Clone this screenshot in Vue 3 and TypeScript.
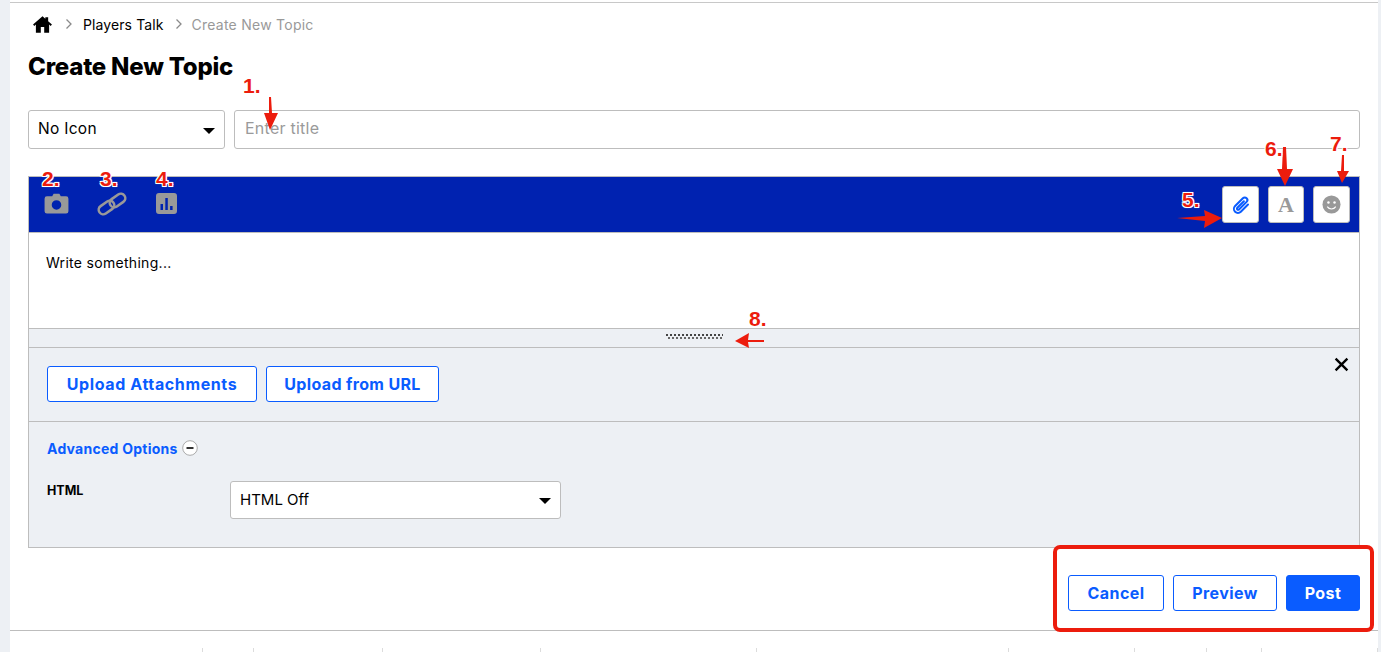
<script setup lang="ts">
const notes = [
  { n: '1.', x: 243, y: 75 },
  { n: '2.', x: 42, y: 168 },
  { n: '3.', x: 100, y: 168 },
  { n: '4.', x: 156, y: 168 },
  { n: '5.', x: 1182, y: 189 },
  { n: '6.', x: 1265, y: 138 },
  { n: '7.', x: 1330, y: 133 },
  { n: '8.', x: 749, y: 308 },
]
const arrows = [
  '269,97 271,97 272,113 278,113 270,130 264,113 269,113',
  '1177,218 1205,216 1204,210 1222,218 1204,228 1205,221',
  '1283,147 1286,147 1287,169 1293,169 1285,186 1277,169 1282,169',
  '1342,155 1344,155 1344,171 1349,171 1342,183 1337,171 1341,171',
  '764,340 764,342 748,342 749,348 735,341 749,333 748,340',
]
const cells = [176, 51, 129, 158, 216, 252, 126, 72, 55, 116]
</script>

<template>
  <div class="page">
    <main class="content">
      <div class="top-rule"></div>
      <nav class="crumbs">
        <svg class="home" viewBox="0 0 20 18" width="19" height="17" aria-hidden="true">
          <path d="M10 .3 0 9l1.300 1.500L3 9.100v8.600h5.200v-6h3.600v6H17V9.100l1.700 1.400L20 9l-4-3.500V1.300h-3v1.600z" fill="#000" />
        </svg>
        <svg class="chev" viewBox="0 0 8 12" width="8" height="12" aria-hidden="true"><path d="M1.500 1.500 6 6l-4.500 4.500" fill="none" stroke="#8a8a8a" stroke-width="1.300" /></svg>
        <span class="crumb-link">Players Talk</span>
        <svg class="chev chev2" viewBox="0 0 8 12" width="8" height="12" aria-hidden="true"><path d="M1.500 1.500 6 6l-4.500 4.500" fill="none" stroke="#8a8a8a" stroke-width="1.300" /></svg>
        <span class="crumb-now">Create New Topic</span>
      </nav>

      <h1 class="title">Create New Topic</h1>

      <div class="topline">
        <div class="select icon-select">
          <span>No Icon</span>
          <i class="caret"></i>
        </div>
        <input class="title-input" type="text" placeholder="Enter title" />
      </div>

      <section class="editor">
        <div class="toolbar">
          <div class="tools">
            <svg viewBox="0 0 26 22" width="25" height="21" aria-hidden="true">
              <path fill-rule="evenodd" fill="#999" d="M3 3.500h5.500L10 .8h6l1.500 2.700H23a2.500 2.500 0 0 1 2.500 2.500v13A2.500 2.500 0 0 1 23 21.500H3A2.500 2.500 0 0 1 .5 19V6A2.500 2.500 0 0 1 3 3.500zM13 7.500a5 5 0 1 0 0 10 5 5 0 0 0 0-10z" />
            </svg>
            <svg class="link-ic" viewBox="0 0 30 24" width="30" height="24" aria-hidden="true">
              <g fill="none" stroke="#999" stroke-width="2.600">
                <rect x="1" y="11" width="17" height="9" rx="4.500" transform="rotate(-35 9.500 15.500)" />
                <rect x="12" y="4" width="17" height="9" rx="4.500" transform="rotate(-35 20.500 8.500)" />
              </g>
            </svg>
            <svg class="chart-ic" viewBox="0 0 21 21" width="21" height="21" aria-hidden="true">
              <path fill-rule="evenodd" fill="#999" d="M3 0h15a3 3 0 0 1 3 3v15a3 3 0 0 1-3 3H3a3 3 0 0 1-3-3V3a3 3 0 0 1 3-3zM4.500 11v6h2.500v-6zM9.300 5v12h2.500V5zM14.100 13v4h2.500v-4z" />
            </svg>
          </div>
          <div class="tool-btns">
            <button class="tbtn" type="button" aria-label="Attach">
              <svg viewBox="0 0 20 20" width="20" height="20" aria-hidden="true">
                <path d="M17 9.500 9.800 16.700a4 4 0 0 1-5.700-5.700l7.800-7.800a2.600 2.600 0 0 1 3.700 3.700l-7.600 7.600a1.200 1.200 0 0 1-1.700-1.700l6.600-6.600" fill="none" stroke="#0a5cff" stroke-width="2" stroke-linecap="round" />
              </svg>
            </button>
            <button class="tbtn tbtn-a" type="button">A</button>
            <button class="tbtn" type="button" aria-label="Emoji">
              <svg viewBox="0 0 20 20" width="19" height="19" aria-hidden="true">
                <circle cx="10" cy="10" r="9.500" fill="#999" />
                <circle cx="6.800" cy="7.800" r="1.300" fill="#fff" />
                <circle cx="13.200" cy="7.800" r="1.300" fill="#fff" />
                <path d="M5.500 12.300c1.200 1.700 2.800 2.400 4.500 2.400s3.300-.7 4.500-2.400" fill="none" stroke="#fff" stroke-width="1.200" />
              </svg>
            </button>
          </div>
        </div>

        <div class="body-area">Write something...</div>
        <div class="resizer">
          <svg class="grip" width="57" height="6" viewBox="0 0 57 6" aria-hidden="true">
            <defs>
              <pattern id="grip-dots" width="4" height="6" patternUnits="userSpaceOnUse">
                <rect width="2" height="2" fill="#444" />
                <rect x="2" y="3" width="2" height="2" fill="#666" />
              </pattern>
            </defs>
            <rect width="57" height="6" fill="url(#grip-dots)" />
          </svg>
        </div>

        <div class="attach">
          <button class="btn btn-att" type="button">Upload Attachments</button>
          <button class="btn btn-url" type="button">Upload from URL</button>
          <svg class="close" viewBox="0 0 14 14" width="15" height="15" aria-hidden="true">
            <path d="M1.500 1.500l11 11M12.500 1.500l-11 11" stroke="#000" stroke-width="2.200" fill="none" />
          </svg>
        </div>

        <div class="options">
          <div class="adv">
            <span>Advanced Options</span>
            <svg viewBox="0 0 16 16" width="16" height="16" aria-hidden="true">
              <circle cx="8" cy="8" r="7.300" fill="#fff" stroke="#aaa" />
              <path d="M4.500 8h7" stroke="#333" stroke-width="2" />
            </svg>
          </div>
          <div class="opt-row">
            <label class="opt-label">HTML</label>
            <div class="select html-select">
              <span>HTML Off</span>
              <i class="caret"></i>
            </div>
          </div>
        </div>
      </section>

      <div class="actions">
        <button class="btn act" type="button">Cancel</button>
        <button class="btn act" type="button">Preview</button>
        <button class="btn act primary" type="button">Post</button>
      </div>

      <div class="foot-line"></div>
      <div class="foot-cells">
        <span v-for="w in cells" :key="w" class="cell" :style="{ width: w + 'px' }"></span>
      </div>
    </main>

    <svg class="arrows" viewBox="0 0 1381 652" width="1381" height="652" aria-hidden="true">
      <polygon v-for="p in arrows" :key="p" :points="p" fill="#ec1c0d" />
    </svg>
    <span v-for="t in notes" :key="t.n" class="note" :style="{ left: t.x + 'px', top: t.y + 'px' }">{{ t.n }}</span>
    <div class="red-box"></div>
  </div>
</template>

<style>
html, body { margin: 0; background: #fff; overflow: hidden; }
</style>

<style scoped>
.page {
  position: relative;
  width: 1381px;
  height: 652px;
  overflow: hidden;
  background: #edf0f4;
  padding: 0 3px 0 10px;
  box-sizing: border-box;
  font-family: Inter, "Open Sans", sans-serif;
  color: #000;
}
.content {
  height: 652px;
  box-sizing: border-box;
  background: #fff;
  position: relative;
  display: flex;
  flex-direction: column;
  padding: 0 18px;
}
.content > * { flex: none; }
.top-rule {
  height: 1px;
  margin: 2px -18px 0;
  background: #c8c8c8;
}
.crumbs {
  display: flex;
  align-items: center;
  height: 18px;
  margin-top: 12px;
  padding-left: 5px;
  font-size: 14px;
  letter-spacing: .1px;
}
.home { flex: none; }
.chev { margin: 0 10px 0 13px; flex: none; }
.chev2 { margin: 0 8px 0 11px; }
.crumb-link { color: #000; }
.crumb-now { color: #999; letter-spacing: .25px; margin-left: 1px; }
.title {
  margin: 18px 0 0;
  font-size: 24px;
  line-height: 32px;
  font-weight: 800;
  letter-spacing: -.22px;
}
.topline {
  display: flex;
  gap: 9px;
  margin-top: 27px;
}
.select {
  display: flex;
  align-items: center;
  justify-content: space-between;
  background: #fff;
  border: 1px solid #bdbdbd;
  border-radius: 3px;
  box-sizing: border-box;
  font-size: 15.500px;
  padding: 0 9px;
}
.icon-select { width: 197px; height: 39px; letter-spacing: .3px; padding-bottom: 2px; }
.icon-select .caret { margin-top: 5px; }
.title-input {
  flex: 1;
  min-width: 0;
  height: 39px;
  box-sizing: border-box;
  border: 1px solid #bdbdbd;
  border-radius: 3px;
  padding: 0 9px 3px 10px;
  font: inherit;
  font-size: 16px;
  letter-spacing: .25px;
  outline: none;
}
.title-input::placeholder { color: #9a9a9a; opacity: 1; }
.caret {
  width: 0;
  height: 0;
  border-left: 6px solid transparent;
  border-right: 6px solid transparent;
  border-top: 6px solid #000;
  margin-top: 3px;
}
.editor {
  margin-top: 27px;
  border: 1px solid #bdbdbd;
  border-top: 0;
  height: 372px;
  box-sizing: border-box;
  display: flex;
  flex-direction: column;
}
.toolbar {
  height: 57px;
  flex: none;
  box-sizing: border-box;
  background: #0022b0;
  border-top: 1px solid #bdbdbd;
  border-bottom: 1px solid #bdbdbd;
  display: flex;
  align-items: center;
  justify-content: space-between;
  padding: 0 9px 0 15px;
}
.tools { display: flex; align-items: center; margin-bottom: 2px; }
.link-ic { margin-left: 28px; }
.chart-ic { margin-left: 29px; }
.tool-btns { display: flex; gap: 9px; }
.tbtn {
  width: 37px;
  height: 37px;
  padding: 0;
  background: #fff;
  border: 1px solid #bdbdbd;
  border-radius: 3px;
  display: flex;
  align-items: center;
  justify-content: center;
}
.tbtn-a {
  width: 36px;
  font-family: "Liberation Serif", serif;
  font-weight: 700;
  font-size: 22px;
  color: #999;
}
.body-area {
  height: 95px;
  flex: none;
  box-sizing: border-box;
  padding: 21px 0 0 17px;
  font-size: 14px;
  letter-spacing: .3px;
  line-height: 18px;
}
.resizer {
  height: 20px;
  flex: none;
  box-sizing: border-box;
  background: #edf0f4;
  border-top: 1px solid #bdbdbd;
  border-bottom: 1px solid #bdbdbd;
  display: flex;
  justify-content: center;
  padding-top: 5px;
}
.grip { flex: none; }
.attach {
  height: 74px;
  flex: none;
  box-sizing: border-box;
  border-bottom: 1px solid #bdbdbd;
  padding: 18px 0 0 18px;
  background: #edf0f4;
  display: flex;
  align-items: flex-start;
  gap: 9px;
  position: relative;
}
.btn {
  height: 36px;
  box-sizing: border-box;
  background: #fff;
  border: 1px solid #0a5cff;
  border-radius: 3px;
  color: #0a5cff;
  font-family: inherit;
  font-weight: 700;
  font-size: 16px;
  letter-spacing: .45px;
  padding: 0 0 1px;
  width: 210px;
}
.btn-att { letter-spacing: .62px; }
.btn-url { width: 173px; letter-spacing: .35px; }
.close { position: absolute; right: 10px; top: 9px; }
.options {
  flex: 1;
  background: #edf0f4;
  padding: 17px 0 0 18px;
}
.adv {
  display: flex;
  align-items: center;
  gap: 4px;
  color: #0a5cff;
  font-weight: 700;
  font-size: 14px;
  letter-spacing: .25px;
  height: 18px;
}
.opt-row { display: flex; align-items: flex-start; margin-top: 24px; }
.opt-label {
  width: 183px;
  font-weight: 700;
  font-size: 12.500px;
  line-height: 18px;
  margin-top: 1px;
}
.html-select { width: 331px; height: 38px; font-size: 15px; padding-bottom: 1px; }
.actions {
  display: flex;
  justify-content: flex-end;
  gap: 9px;
  margin-top: 27px;
}
.act { width: 96px; }
.act:nth-child(2) { width: 104px; }
.primary { width: 74px; background: #0a5cff; color: #fff; }
.foot-line {
  margin: 19px -18px 0;
  height: 1px;
  background: #bdbdbd;
}
.foot-cells {
  display: flex;
  margin: 17px -18px 0;
  height: 10px;
  padding-left: 17px;
}
.cell {
  flex: none;
  box-sizing: border-box;
  border-right: 1px solid #dcdcdc;
}
.arrows { position: absolute; left: 0; top: 0; pointer-events: none; }
.note {
  position: absolute;
  font-family: "Liberation Sans", Arial, sans-serif;
  font-weight: 700;
  font-size: 21px;
  line-height: 22px;
  color: #ec1c0d;
  text-shadow: -1px -1px 0 #fff, 1px -1px 0 #fff, -1px 1px 0 #fff, 1px 1px 0 #fff, 0 0 2px #fff;
}
.red-box {
  position: absolute;
  left: 1053px;
  top: 545px;
  width: 321px;
  height: 87px;
  box-sizing: border-box;
  border: 4px solid #ec1c0d;
  border-radius: 7px;
}
</style>
